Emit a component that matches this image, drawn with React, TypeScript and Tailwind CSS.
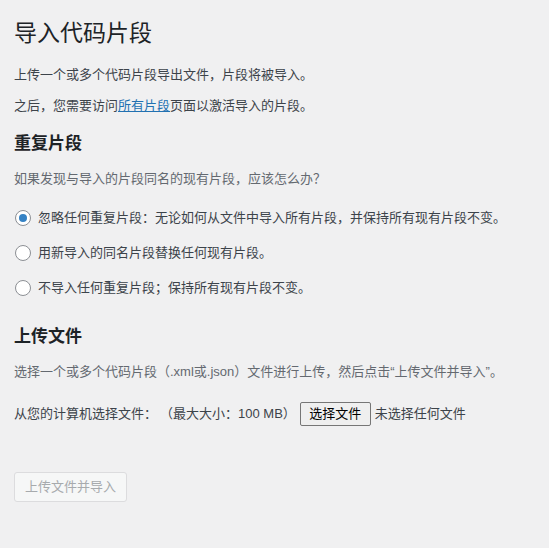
export default function App() {
  const options = [
    "忽略任何重复片段：无论如何从文件中导入所有片段，并保持所有现有片段不变。",
    "用新导入的同名片段替换任何现有片段。",
    "不导入任何重复片段；保持所有现有片段不变。",
  ];

  return (
    <div
      className="min-h-[548px] bg-[#f0f0f1] px-[14px] pt-[18px] text-[13px] text-[#3c434a]"
      style={{ fontFamily: '"Liberation Sans", "Noto Sans CJK SC", sans-serif' }}
    >
      {/* Title */}
      <h1 className="text-[23px] leading-[30px] font-normal text-[#1d2327]">导入代码片段</h1>

      <p className="mt-[17px] leading-[20px]">上传一个或多个代码片段导出文件，片段将被导入。</p>
      <p className="mt-[11px] leading-[20px]">
        之后，您需要访问
        <a href="#" className="text-[#2271b1] underline">所有片段</a>
        页面以激活导入的片段。
      </p>

      {/* Duplicate snippets */}
      <h2 className="mt-[16px] text-[17px] leading-[24px] font-semibold text-[#1d2327]">重复片段</h2>
      <p className="mt-[13px] leading-[20px] text-[#646970]">如果发现与导入的片段同名的现有片段，应该怎么办？</p>

      <div className="mt-[19px] flex flex-col gap-[15px]">
        {options.map((label, i) => (
          <label key={i} className="flex h-[20px] items-center gap-[7px] pl-px">
            <span className="flex h-[16px] w-[16px] items-center justify-center rounded-full border border-[#8c8f94] bg-white">
              {i === 0 && <span className="h-[8px] w-[8px] rounded-full bg-[#3582c4]" />}
            </span>
            <span>{label}</span>
          </label>
        ))}
      </div>

      {/* Upload files */}
      <h2 className="mt-[27px] text-[17px] leading-[24px] font-semibold text-[#1d2327]">上传文件</h2>
      <p className="mt-[13px] leading-[20px] text-[#646970]">
        选择一个或多个代码片段（.xml或.json）文件进行上传，然后点击“上传文件并导入”。
      </p>

      <div className="mt-[20px] flex h-[24px] items-center">
        <span>从您的计算机选择文件：</span>
        <span className="ml-[3px]">（最大大小：100 MB）</span>
        <button className="ml-[4px] h-[24px] w-[71px] rounded-[2px] border border-[#767676] bg-[#efefef] text-[13px] text-black">
          选择文件
        </button>
        <span className="ml-[4px]">未选择任何文件</span>
      </div>

      <button
        disabled
        className="mt-[46px] h-[30px] rounded-[3px] border border-[#dcdcde] bg-[#f6f7f7] px-[10px] text-[13px] text-[#a7aaad]"
      >
        上传文件并导入
      </button>
    </div>
  );
}
